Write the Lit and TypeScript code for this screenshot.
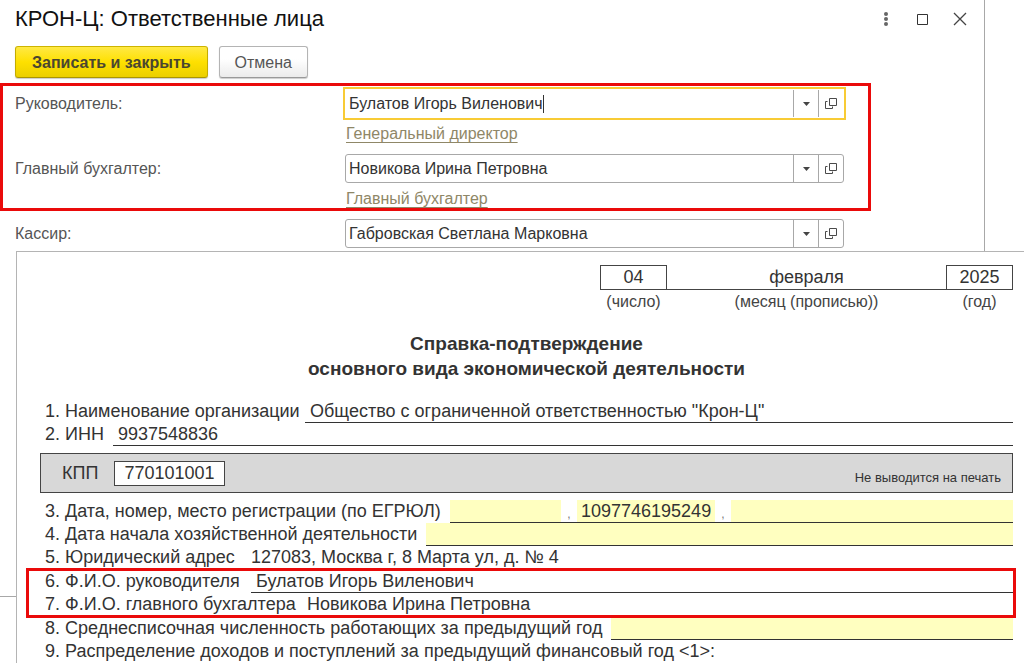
import { LitElement, html, css, svg, nothing } from "lit";
import { customElement, property } from "lit/decorators.js";
import { classMap } from "lit/directives/class-map.js";

const openIcon = svg`<path d="M5.500 1.500h7v7h-7zM3.500 4.500h-2v7h7v-2" fill="none" stroke="#4a4a4a" />`;

@customElement("person-field")
export class PersonField extends LitElement {
  static styles = css`
    :host {
      display: grid;
      grid-template-columns: 330px minmax(0, 1fr);
      font: 16px/19px "Liberation Sans", Arial, sans-serif;
      color: #555;
    }
    .label {
      line-height: 29px;
    }
    .box {
      display: flex;
      height: 29px;
      box-sizing: border-box;
      border: 1px solid #a8a8a8;
      border-radius: 3px;
      background: #fff;
    }
    .box.active {
      border-color: #fff;
      border-radius: 0;
      outline: 2px solid #f8cb35;
    }
    .entry {
      flex: 1;
      min-width: 0;
      display: flex;
      align-items: center;
      padding-left: 3px;
    }
    .input {
      flex: 1;
      min-width: 0;
      height: 27px;
      padding: 0;
      border: 0;
      outline: 0;
      background: none;
      font: inherit;
      color: #333;
    }
    .active .input {
      flex: 0 1 auto;
      field-sizing: content;
    }
    .caret {
      width: 1px;
      height: 18px;
      background: #333;
    }
    .tool {
      width: 25px;
      padding: 0;
      display: grid;
      place-items: center;
      border: 0;
      border-left: 1px solid #a8a8a8;
      background: none;
    }
    .link {
      grid-column: 2;
      justify-self: start;
      margin: 6px 0 0 1px;
      color: #8f8767;
      text-underline-offset: 3px;
      text-decoration-thickness: 1px;
      text-decoration-skip-ink: none;
    }
  `;
  @property() label = "";
  @property() value = "";
  @property() post = "";
  @property({ type: Boolean }) active = false;

  render() {
    return html`
      <label class="label" for="person">${this.label}:</label>
      <div class=${classMap({ box: true, active: this.active })}>
        <span class="entry">
          <input class="input" id="person" .value=${this.value} />
          ${this.active ? html`<span class="caret"></span>` : nothing}
        </span>
        <button class="tool" aria-label="Выбрать">
          <svg width="7" height="4"><path d="M0 0h7L3.500 4z" fill="#444" /></svg>
        </button>
        <button class="tool" aria-label="Открыть">
          <svg width="14" height="13">${openIcon}</svg>
        </button>
      </div>
      ${this.post ? html`<a class="link" href="#">${this.post}</a>` : nothing}
    `;
  }
}

@customElement("persons-dialog")
export class PersonsDialog extends LitElement {
  static styles = css`
    :host {
      display: block;
      box-sizing: border-box;
      border-right: 1px solid #a8a8a8;
      border-bottom: 1px solid #a8a8a8;
      background: #fff;
      font: 16px/19px "Liberation Sans", Arial, sans-serif;
    }
    .head {
      display: flex;
      align-items: center;
      justify-content: space-between;
      height: 37px;
      padding: 0 15px;
    }
    .title {
      margin: 0;
      font-size: 22px;
      font-weight: 400;
      color: #111;
    }
    .controls {
      display: flex;
      gap: 19px;
    }
    .control {
      width: 18px;
      height: 18px;
      padding: 0;
      border: 0;
      background: none;
    }
    .control svg {
      display: block;
    }
    .commands {
      display: flex;
      gap: 11px;
      padding: 9px 15px 5px;
    }
    .command {
      height: 32px;
      padding: 0 15px;
      border: 1px solid #b4b4b4;
      border-bottom-color: #999;
      border-radius: 3px;
      background: linear-gradient(#fff 40%, #ebebeb);
      box-shadow: 0 1px 1px #ccc;
      font: inherit;
      color: #555;
    }
    .command.primary {
      padding: 0 16px;
      border-color: #cdb400 #c4ac00 #ab9600;
      background: linear-gradient(#ffe945, #fee000 50%, #ebcf00);
      font-weight: 700;
      color: #4a4630;
    }
    .marked {
      display: grid;
      gap: 11px;
      margin-right: 113px;
      padding: 3px 24px 0 12px;
      border: 3px solid #ea0a0a;
    }
    .plain {
      margin: 8px 140px 0 15px;
    }
  `;

  render() {
    return html`
      <header class="head">
        <h1 class="title">КРОН-Ц: Ответственные лица</h1>
        <div class="controls">
          <button class="control" aria-label="Ещё">
            <svg width="18" height="18" fill="#666">
              <circle cx="9" cy="4" r="2" /><circle cx="9" cy="9" r="2" /><circle cx="9" cy="14" r="2" />
            </svg>
          </button>
          <button class="control" aria-label="Развернуть">
            <svg width="18" height="18"><path d="M3.500 4.500h10v10h-10z" fill="none" stroke="#333" /></svg>
          </button>
          <button class="control" aria-label="Закрыть">
            <svg width="18" height="18"><path d="M3 3l12 12M15 3L3 15" stroke="#444" stroke-width="1.300" /></svg>
          </button>
        </div>
      </header>
      <div class="commands">
        <button class="command primary">Записать и закрыть</button>
        <button class="command">Отмена</button>
      </div>
      <section class="marked">
        <person-field label="Руководитель" value="Булатов Игорь Виленович" post="Генеральный директор" active></person-field>
        <person-field label="Главный бухгалтер" value="Новикова Ирина Петровна" post="Главный бухгалтер"></person-field>
      </section>
      <person-field class="plain" label="Кассир" value="Габровская Светлана Марковна"></person-field>
    `;
  }
}

@customElement("activity-report")
export class ActivityReport extends LitElement {
  static styles = css`
    :host {
      display: block;
      box-sizing: border-box;
      padding: 13px 11px 0 23px;
      border: solid #b4b4b4;
      border-width: 1px 0 0 1px;
      background: #fff;
      font: 18px/23px "Liberation Sans", Arial, sans-serif;
      color: #333;
    }
    .date {
      display: grid;
      grid-template-columns: 67px 279px 67px;
      justify-content: end;
      text-align: center;
    }
    .part {
      height: 25px;
      box-sizing: border-box;
      border: 1px solid #444;
    }
    .part.open {
      border-width: 0 0 1px;
      padding-top: 1px;
    }
    .caption {
      font-size: 16px;
      color: #444;
    }
    .title {
      margin: 18px 0 19px;
      font-size: 19px;
      line-height: 25px;
      text-align: center;
    }
    .row {
      display: flex;
      height: 23px;
      padding-left: 5px;
      white-space: nowrap;
    }
    .label {
      flex: none;
    }
    .value {
      flex: 1;
      box-sizing: border-box;
      padding-left: 5px;
    }
    .value.lined {
      border-bottom: 1px solid #333;
    }
    .cells {
      flex: 1;
      min-width: 0;
      display: flex;
      border-bottom: 1px solid #333;
    }
    .comma {
      width: 16px;
      font-size: 12px;
      line-height: 28px;
      text-align: center;
      color: #777;
    }
    .cell {
      min-width: 0;
      height: 22px;
      box-sizing: border-box;
      padding: 0 4px;
      border: 0;
      background: #ffffc0;
      font: inherit;
      color: inherit;
    }
    .cell.short {
      width: 111px;
    }
    .cell.number {
      width: 138px;
    }
    .cell.wide {
      flex: 1;
    }
    .kpp {
      display: flex;
      align-items: center;
      height: 40px;
      box-sizing: border-box;
      margin: 7px 0;
      padding: 0 11px 0 21px;
      border: 1px solid #444;
      background: #d8d8d8;
    }
    .kpp-label {
      width: 52px;
    }
    .kpp-input {
      width: 111px;
      height: 25px;
      box-sizing: border-box;
      padding: 1px 0 0;
      border: 1px solid #444;
      background: #fff;
      font: inherit;
      color: inherit;
      text-align: center;
    }
    .note {
      flex: 1;
      padding-top: 8px;
      font-size: 13px;
      text-align: right;
    }
    .marked {
      position: relative;
      padding: 1px 0;
    }
    .marked::after {
      content: "";
      position: absolute;
      inset: -1px -3px -1px -14px;
      border: 3px solid #ea0a0a;
      pointer-events: none;
    }
  `;

  private row(label: string, width: number, value: string, lined = false) {
    return html`<div class="row">
      <span class="label" style="width:${width}px">${label}</span>
      <span class=${classMap({ value: true, lined })}>${value}</span>
    </div>`;
  }

  render() {
    return html`
      <div class="date">
        <span class="part">04</span><span class="part open">февраля</span><span class="part">2025</span>
        <span class="caption">(число)</span><span class="caption">(месяц (прописью))</span><span class="caption">(год)</span>
      </div>
      <h2 class="title">Справка-подтверждение<br />основного вида экономической деятельности</h2>
      ${this.row("1. Наименование организации", 260, 'Общество с ограниченной ответственностью "Крон-Ц"', true)}
      ${this.row("2. ИНН", 68, "9937548836", true)}
      <div class="kpp">
        <label class="kpp-label" for="kpp">КПП</label>
        <input class="kpp-input" id="kpp" value="770101001" />
        <span class="note">Не выводится на печать</span>
      </div>
      <div class="row">
        <label class="label" for="reg" style="width:405px">3. Дата, номер, место регистрации (по ЕГРЮЛ)</label>
        <span class="cells">
          <input class="cell short" aria-label="Дата регистрации" />
          <span class="comma">,</span>
          <input class="cell number" id="reg" value="1097746195249" />
          <span class="comma">,</span>
          <input class="cell wide" aria-label="Место регистрации" />
        </span>
      </div>
      <div class="row">
        <label class="label" for="start" style="width:381px">4. Дата начала хозяйственной деятельности</label>
        <span class="cells"><input class="cell wide" id="start" /></span>
      </div>
      ${this.row("5. Юридический адрес", 201, "127083, Москва г, 8 Марта ул, д. № 4")}
      <div class="marked">
        ${this.row("6. Ф.И.О. руководителя", 206, "Булатов Игорь Виленович", true)}
        ${this.row("7. Ф.И.О. главного бухгалтера", 257, "Новикова Ирина Петровна")}
      </div>
      <div class="row">
        <label class="label" for="staff" style="width:566px">8. Среднесписочная численность работающих за предыдущий год</label>
        <span class="cells"><input class="cell wide" id="staff" /></span>
      </div>
      <div class="row">9. Распределение доходов и поступлений за предыдущий финансовый год &lt;1&gt;:</div>
    `;
  }
}

@customElement("app-root")
export class AppRoot extends LitElement {
  static styles = css`
    :host {
      display: grid;
      background: #fff;
    }
    .dialog {
      grid-area: 1 / 1;
      margin: 0 39px 66px 0;
    }
    .report {
      grid-area: 1 / 1;
      margin: 251px 0 0 16px;
    }
  `;

  render() {
    return html`
      <persons-dialog class="dialog"></persons-dialog>
      <activity-report class="report"></activity-report>
    `;
  }
}
